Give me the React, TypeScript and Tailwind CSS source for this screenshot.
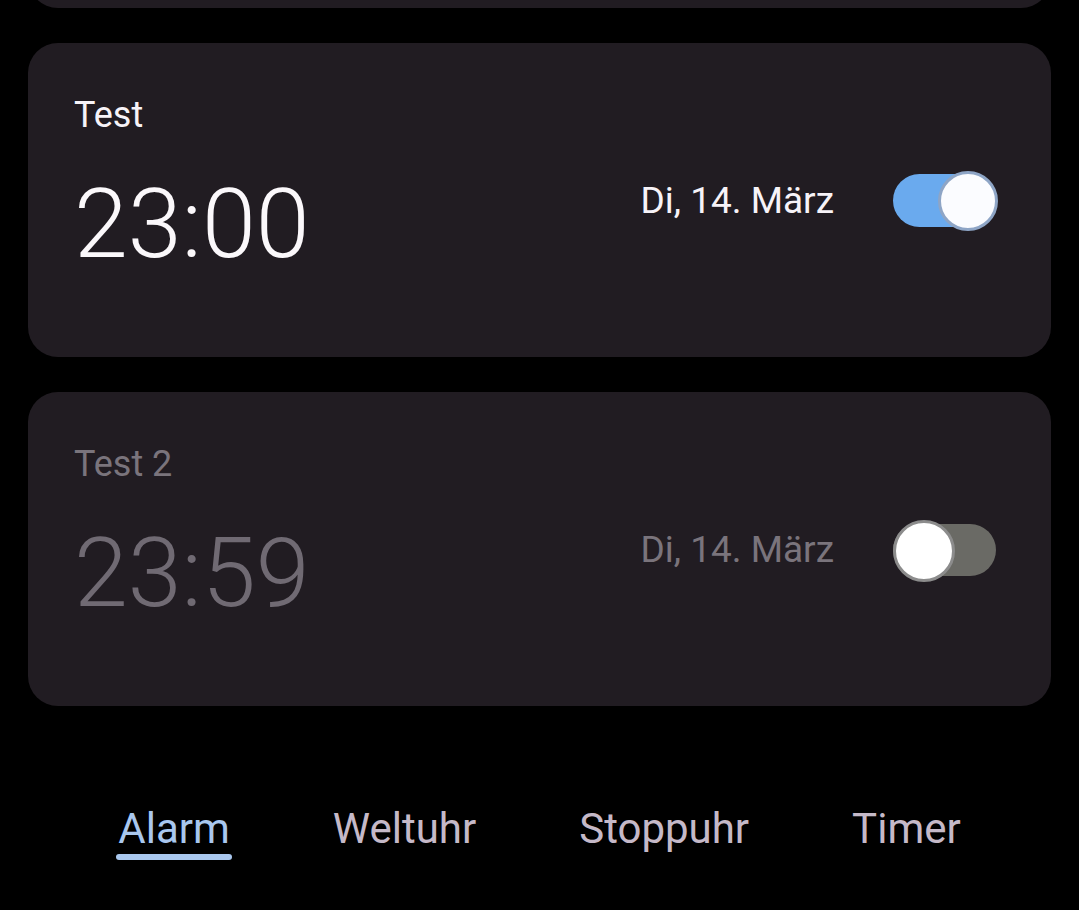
import React from "react";

function Toggle({ on }: { on: boolean }) {
  return (
    <div className="relative w-[105px] h-[62px] shrink-0">
      <div
        className={
          on
            ? "absolute left-0 right-[4px] top-[4px] h-[53px] rounded-full bg-[#6aaaee]"
            : "absolute left-0 right-[2px] top-[5px] h-[52px] rounded-full bg-[#6a6a65]"
        }
      />
      <div
        className={
          on
            ? "absolute right-0 top-[1px] w-[60px] h-[60px] rounded-full bg-[#fbfcff] border-[3px] border-[#8ea5c6]"
            : "absolute left-0 top-[1px] w-[62px] h-[62px] rounded-full bg-white border-[3px] border-[#8c8c8c]"
        }
      />
    </div>
  );
}

function Card({
  title,
  time,
  date,
  on,
}: {
  title: string;
  time: string;
  date: string;
  on: boolean;
}) {
  return (
    <div className="h-[314px] rounded-[30px] bg-[#211c22] flex items-center justify-between pl-[46px] pr-[53px]">
      <div className="self-start pt-[51px] flex flex-col">
        <div
          className={
            "text-[36px] leading-[42px] " +
            (on ? "text-[#f7f3f8]" : "text-[#7a747c]")
          }
        >
          {title}
        </div>
        <div
          className={
            "mt-[40px] text-[97px] leading-[97px] font-light " +
            (on ? "text-[#fbf8fb]" : "text-[#706a73]")
          }
        >
          {time}
        </div>
      </div>
      <div className="flex items-center gap-[59px] pt-[2px]">
        <div
          className={
            "text-[37px] leading-[42px] " +
            (on ? "text-[#f7f3f8]" : "text-[#7a747c]")
          }
        >
          {date}
        </div>
        <Toggle on={on} />
      </div>
    </div>
  );
}

export default function App() {
  return (
    <div className="w-[1079px] h-[910px] bg-black overflow-hidden font-['Roboto',sans-serif]">
      <div className="px-[28px] flex flex-col gap-[35px]">
        <div className="h-[314px] mt-[-306px] rounded-[30px] bg-[#211c22]" />
        <Card title="Test" time="23:00" date="Di, 14. März" on={true} />
        <Card title="Test 2" time="23:59" date="Di, 14. März" on={false} />
      </div>
      <nav className="mt-[98px] flex justify-center gap-[103px]">
        <div className="flex flex-col">
          <div className="text-[42px] leading-[49px] text-[#a9c7ee]">Alarm</div>
          <div className="mt-[1px] mx-[-2px] h-[6px] rounded-full bg-[#a9c7ee]" />
        </div>
        <div className="text-[42px] leading-[49px] text-[#c5b9c8]">Weltuhr</div>
        <div className="text-[42px] leading-[49px] text-[#c5b9c8]">Stoppuhr</div>
        <div className="text-[42px] leading-[49px] text-[#c5b9c8]">Timer</div>
      </nav>
    </div>
  );
}
